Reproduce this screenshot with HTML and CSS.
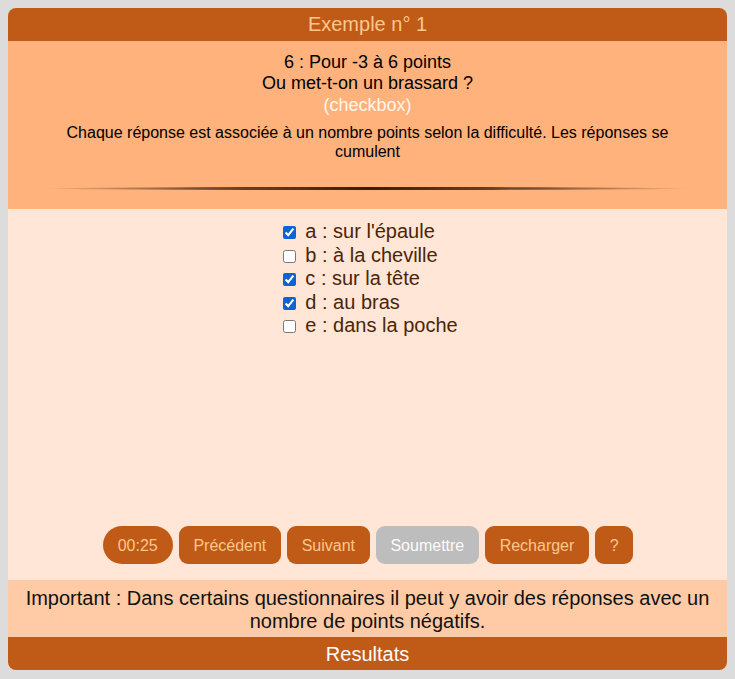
FILE: index.html
```html
<!DOCTYPE html>
<html lang="fr">
<head>
<meta charset="utf-8">
<title>Exemple n° 1</title>
<link rel="stylesheet" href="styles.css">
</head>
<body>
<div class="quiz">
  <div class="title">Exemple n° 1</div>
  <div class="question">
    <div class="q-line">6 : Pour -3 à 6 points</div>
    <div class="q-line">Ou met-t-on un brassard ?</div>
    <div class="q-type">(checkbox)</div>
    <p class="q-help">Chaque réponse est associée à un nombre points selon la difficulté. Les réponses se cumulent</p>
    <div class="divider"></div>
  </div>
  <div class="answers">
    <ul class="choices">
      <li><label><input type="checkbox" checked> a : sur l'épaule</label></li>
      <li><label><input type="checkbox"> b : à la cheville</label></li>
      <li><label><input type="checkbox" checked> c : sur la tête</label></li>
      <li><label><input type="checkbox" checked> d : au bras</label></li>
      <li><label><input type="checkbox"> e : dans la poche</label></li>
    </ul>
    <div class="buttons">
      <span class="btn timer">00:25</span>
      <button class="btn">Précédent</button>
      <button class="btn">Suivant</button>
      <button class="btn disabled">Soumettre</button>
      <button class="btn">Recharger</button>
      <button class="btn">?</button>
    </div>
  </div>
  <div class="note">Important : Dans certains questionnaires il peut y avoir des réponses avec un nombre de points négatifs.</div>
  <div class="results">Resultats</div>
</div>
</body>
</html>
```
FILE: styles.css
```css
html, body {
  margin: 0;
  padding: 0;
}
body {
  background: #dcdcdc;
  font-family: "Liberation Sans", Arial, sans-serif;
  padding: 8px;
}
.quiz {
  width: 719px;
  height: 662px;
  border-radius: 8px;
  overflow: hidden;
  display: flex;
  flex-direction: column;
}
.title {
  background: #c05a17;
  color: #fcc78c;
  height: 33px;
  line-height: 33px;
  text-align: center;
  font-size: 20px;
}
.question {
  background: #ffb27b;
  height: 168px;
  text-align: center;
  color: #000;
  padding-top: 11px;
  box-sizing: border-box;
}
.q-line {
  font-size: 18px;
  line-height: 21px;
}
.q-type {
  font-size: 18px;
  line-height: 22px;
  color: #fff6ea;
}
.q-help {
  margin: 8px 50px 0;
  font-size: 16px;
  line-height: 18.5px;
}
.divider {
  margin: 26px 37px 0;
  height: 3px;
  border-radius: 50%;
  background: linear-gradient(to right, rgba(60,30,10,0), rgba(60,30,10,0.7) 25%, #3a1d08 50%, rgba(60,30,10,0.7) 75%, rgba(60,30,10,0));
}
.answers {
  background: #ffe6d6;
  flex: 1;
  display: flex;
  flex-direction: column;
  align-items: center;
  padding-top: 11px;
  box-sizing: border-box;
}
.choices {
  list-style: none;
  margin: 0;
  padding: 0 0 0 6px;
  flex: 1;
}
.choices li {
  font-size: 20px;
  line-height: 23.5px;
  color: #4a2508;
}
.choices label {
  display: flex;
  align-items: center;
}
.choices input {
  width: 13px;
  height: 13px;
  margin: 2px 9px 0 0;
  accent-color: #0b63d4;
}
.buttons {
  display: flex;
  gap: 6px;
  margin-bottom: 16px;
  padding-left: 1px;
}
.btn {
  font-family: "Liberation Sans", Arial, sans-serif;
  font-size: 16px;
  height: 38px;
  line-height: 40px;
  padding: 0 14.7px;
  border: none;
  border-radius: 9px;
  background: #c05a17;
  color: #fcc78c;
  box-sizing: border-box;
}
.btn.timer {
  border-radius: 19px;
  width: 70px;
  text-align: center;
  padding: 0;
}
.btn.disabled {
  background: #bdbdbd;
  color: #fbfbfb;
}
.note {
  background: #ffcba6;
  color: #111;
  text-align: center;
  font-size: 20px;
  line-height: 23px;
  height: 57px;
  padding: 7px 10px 0;
  box-sizing: border-box;
}
.results {
  background: #c05a17;
  color: #fff;
  height: 33px;
  line-height: 34px;
  text-align: center;
  font-size: 20px;
}
```
